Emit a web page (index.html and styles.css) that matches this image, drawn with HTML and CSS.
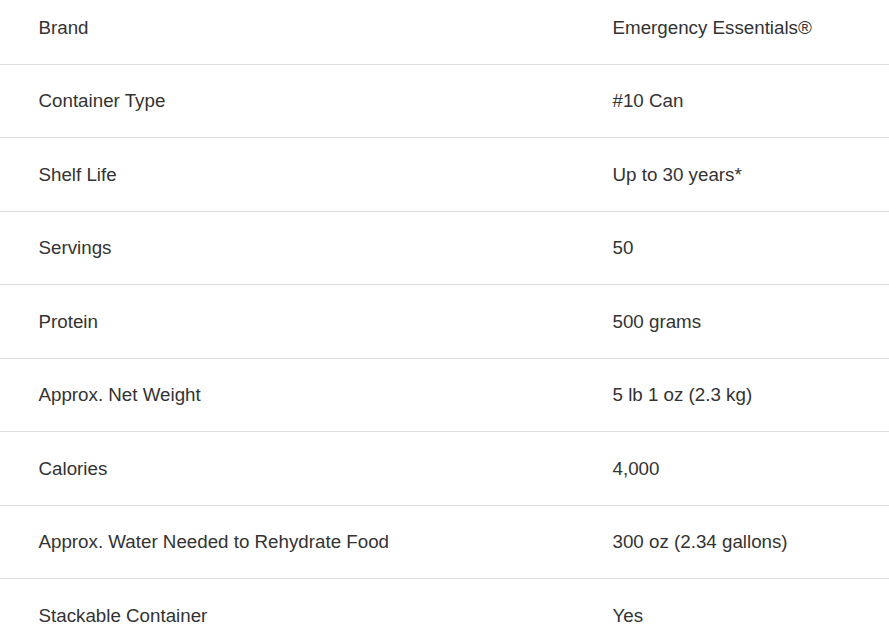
FILE: index.html
```html
<!DOCTYPE html>
<html>
<head>
<meta charset="utf-8">
<link rel="stylesheet" href="styles.css">
</head>
<body>
<div class="specs">
  <div class="row"><div class="cell label">Brand</div><div class="cell value">Emergency Essentials®</div></div>
  <div class="row"><div class="cell label">Container Type</div><div class="cell value">#10 Can</div></div>
  <div class="row"><div class="cell label">Shelf Life</div><div class="cell value">Up to 30 years*</div></div>
  <div class="row"><div class="cell label">Servings</div><div class="cell value">50</div></div>
  <div class="row"><div class="cell label">Protein</div><div class="cell value">500 grams</div></div>
  <div class="row"><div class="cell label">Approx. Net Weight</div><div class="cell value">5 lb 1 oz (2.3 kg)</div></div>
  <div class="row"><div class="cell label">Calories</div><div class="cell value">4,000</div></div>
  <div class="row"><div class="cell label">Approx. Water Needed to Rehydrate Food</div><div class="cell value">300 oz (2.34 gallons)</div></div>
  <div class="row"><div class="cell label">Stackable Container</div><div class="cell value">Yes</div></div>
</div>
</body>
</html>
```
FILE: styles.css
```css
html, body {
  margin: 0;
  padding: 0;
  background: #fff;
  overflow: hidden;
}
body {
  font-family: "Liberation Sans", Arial, sans-serif;
  font-size: 18.75px;
  color: #333;
}
.specs {
  margin-top: -9px;
}
.row {
  display: grid;
  grid-template-columns: 574px 1fr;
  border-bottom: 1px solid #dedede;
}
.cell {
  padding: 23.5px 0 23.5px 38.5px;
  line-height: 25.5px;
}
```
